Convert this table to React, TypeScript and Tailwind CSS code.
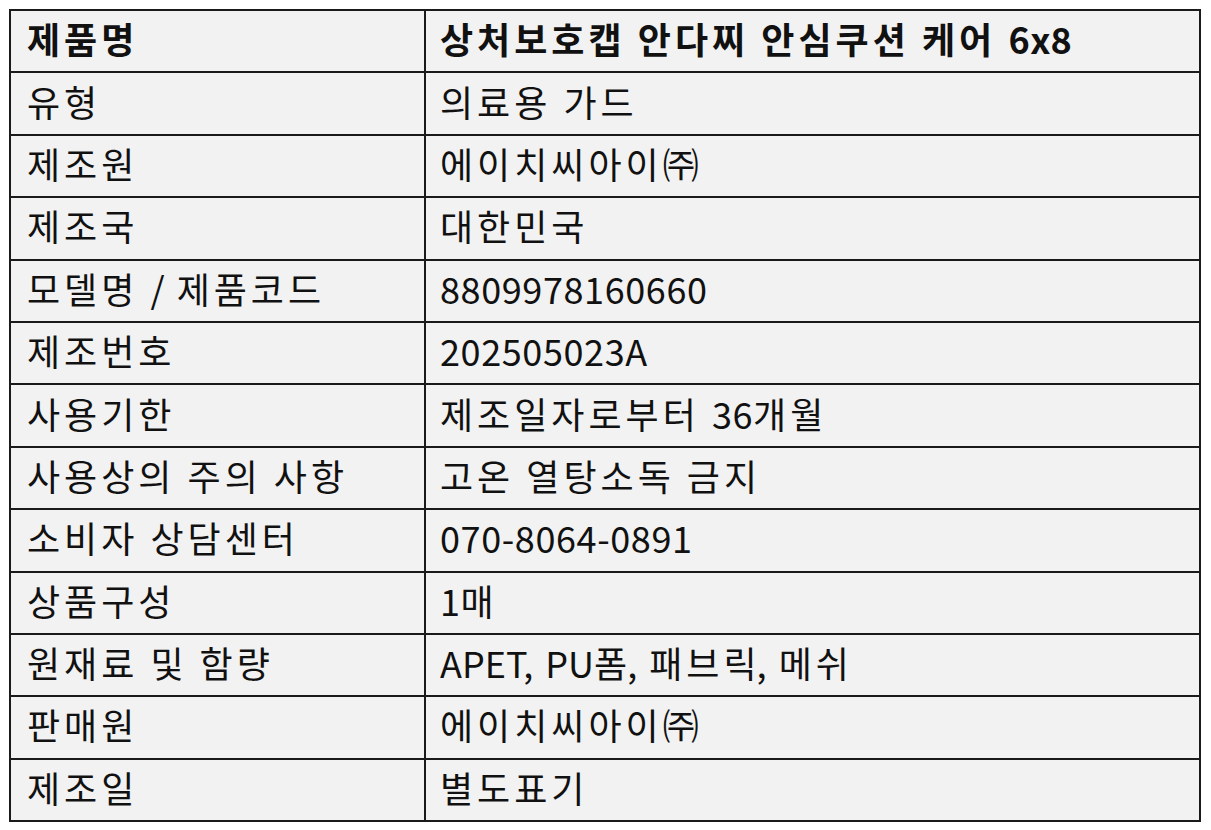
import React from "react";

const rows: [string, string][] = [
  ["유형", "의료용 가드"],
  ["제조원", "에이치씨아이㈜"],
  ["제조국", "대한민국"],
  ["모델명 / 제품코드", "8809978160660"],
  ["제조번호", "202505023A"],
  ["사용기한", "제조일자로부터 36개월"],
  ["사용상의 주의 사항", "고온 열탕소독 금지"],
  ["소비자 상담센터", "070-8064-0891"],
  ["상품구성", "1매"],
  ["원재료 및 함량", "APET, PU폼, 패브릭, 메쉬"],
  ["판매원", "에이치씨아이㈜"],
  ["제조일", "별도표기"],
];

function Txt({ s }: { s: string }) {
  const parts = s.match(/[가-힣㈜ ]+|[0-9\-]+|,|[^가-힣㈜ ,0-9\-]+/g) || [];
  return (
    <>
      {parts.map((p, i) => {
        const next = i + 1 < parts.length ? parts[i + 1] : "";
        if (/[가-힣㈜ ]/.test(p[0])) {
          if (next === ",") {
            return (
              <React.Fragment key={i}>
                {p.length > 1 ? <span className="tracking-[4px]">{p.slice(0, -1)}</span> : null}
                <span>{p.slice(-1)}</span>
              </React.Fragment>
            );
          }
          return <span key={i} className="tracking-[4px]">{p}</span>;
        }
        if (/[0-9\-]/.test(p[0])) return <span key={i} className="tracking-[0.6px]">{p}</span>;
        return <span key={i}>{p}</span>;
      })}
    </>
  );
}

export default function App() {
  return (
    <div className="w-[1211px] h-[830px] bg-white pt-[9px] pl-[9px]" style={{ fontFamily: '"Noto Sans CJK KR", "Noto Sans", sans-serif' }}>
      <table className="border-collapse bg-[#f2f2f2] text-[#111] text-[36px] leading-none">
        <tbody>
          <tr className="h-[62.4px]">
            <td className="w-[415px] border-2 border-[#1a1a1a] pl-[16px] pb-[6px] font-bold align-middle whitespace-nowrap"><Txt s="제품명" /></td>
            <td className="w-[775px] border-2 border-[#1a1a1a] pl-[14px] pb-[6px] font-bold align-middle whitespace-nowrap"><Txt s="상처보호캡 안다찌 안심쿠션 케어 6x8" /></td>
          </tr>
          {rows.map(([k, v]) => (
            <tr key={k} className="h-[62.4px]">
              <td className="border-2 border-[#1a1a1a] pl-[16px] pb-[6px] align-middle whitespace-nowrap"><Txt s={k} /></td>
              <td className="border-2 border-[#1a1a1a] pl-[14px] pb-[6px] align-middle whitespace-nowrap"><Txt s={v} /></td>
            </tr>
          ))}
        </tbody>
      </table>
    </div>
  );
}
